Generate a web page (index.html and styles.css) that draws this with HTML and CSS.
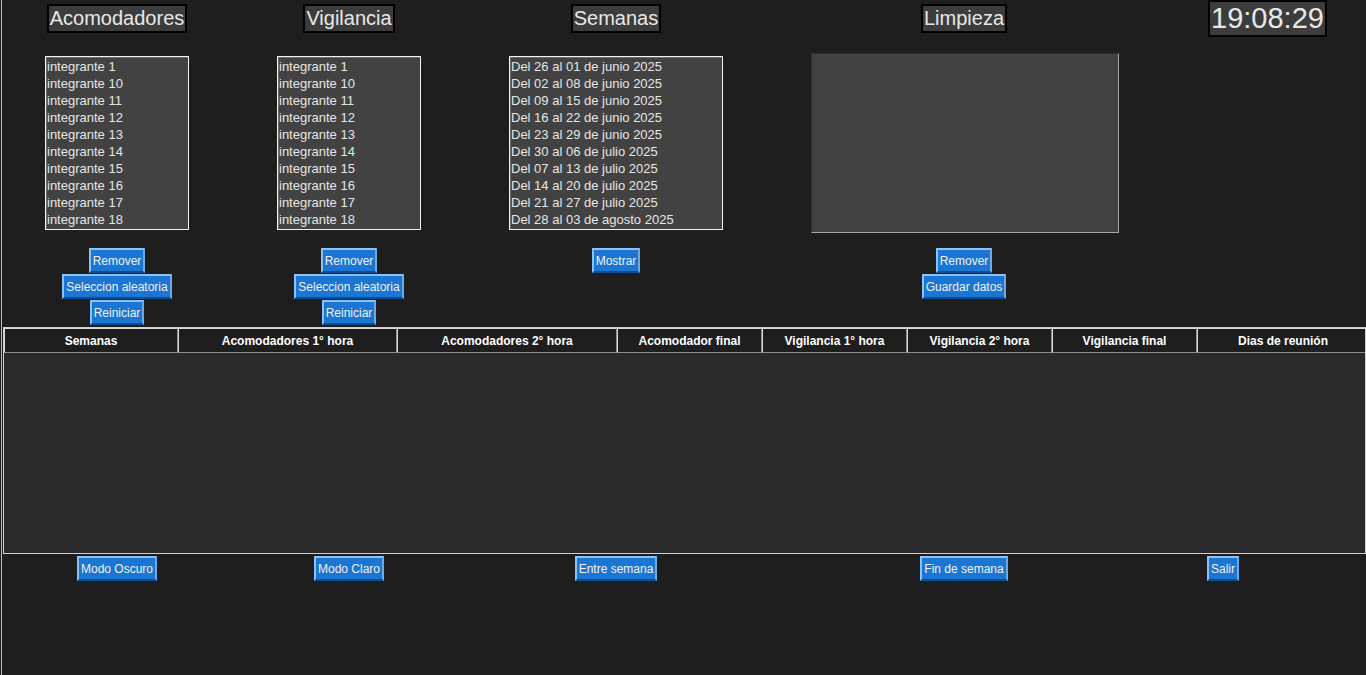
FILE: index.html
```html
<!DOCTYPE html>
<html lang="es">
<head>
<meta charset="utf-8">
<title>Asignaciones</title>
<link rel="stylesheet" href="styles.css">
</head>
<body>
<div class="app">
  <section class="top cols">
    <div class="title">Acomodadores</div>
    <div class="title">Vigilancia</div>
    <div class="title">Semanas</div>
    <div class="title">Limpieza</div>
    <div class="clock">19:08:29</div>

    <ul class="listbox lb-person">
      <li>integrante 1</li><li>integrante 10</li><li>integrante 11</li><li>integrante 12</li><li>integrante 13</li>
      <li>integrante 14</li><li>integrante 15</li><li>integrante 16</li><li>integrante 17</li><li>integrante 18</li>
    </ul>
    <ul class="listbox lb-person">
      <li>integrante 1</li><li>integrante 10</li><li>integrante 11</li><li>integrante 12</li><li>integrante 13</li>
      <li>integrante 14</li><li>integrante 15</li><li>integrante 16</li><li>integrante 17</li><li>integrante 18</li>
    </ul>
    <ul class="listbox lb-weeks">
      <li>Del 26 al 01 de junio 2025</li><li>Del 02 al 08 de junio 2025</li><li>Del 09 al 15 de junio 2025</li>
      <li>Del 16 al 22 de junio 2025</li><li>Del 23 al 29 de junio 2025</li><li>Del 30 al 06 de julio 2025</li>
      <li>Del 07 al 13 de julio 2025</li><li>Del 14 al 20 de julio 2025</li><li>Del 21 al 27 de julio 2025</li>
      <li>Del 28 al 03 de agosto 2025</li>
    </ul>
    <div class="textbox"></div>
    <div class="empty"></div>

    <div class="stack">
      <button class="btn">Remover</button>
      <button class="btn">Seleccion aleatoria</button>
      <button class="btn">Reiniciar</button>
    </div>
    <div class="stack">
      <button class="btn">Remover</button>
      <button class="btn">Seleccion aleatoria</button>
      <button class="btn">Reiniciar</button>
    </div>
    <div class="stack">
      <button class="btn">Mostrar</button>
    </div>
    <div class="stack">
      <button class="btn">Remover</button>
      <button class="btn">Guardar datos</button>
    </div>
    <div class="empty"></div>
  </section>

  <section class="table">
    <div class="thead">
      <div class="th w1">Semanas</div>
      <div class="th w2">Acomodadores 1° hora</div>
      <div class="th w3">Acomodadores 2° hora</div>
      <div class="th w4">Acomodador final</div>
      <div class="th w4">Vigilancia 1° hora</div>
      <div class="th w4">Vigilancia 2° hora</div>
      <div class="th w4">Vigilancia final</div>
      <div class="th w5">Dias de reunión</div>
    </div>
    <div class="tbody"></div>
  </section>

  <section class="bottom cols">
    <button class="btn">Modo Oscuro</button>
    <button class="btn">Modo Claro</button>
    <button class="btn">Entre semana</button>
    <button class="btn">Fin de semana</button>
    <button class="btn salir">Salir</button>
  </section>
</div>
</body>
</html>
```

FILE: styles.css
```css
html, body {
  margin: 0;
  padding: 0;
  background: #1e1e1e;
  height: 100%;
  overflow: hidden;
}

.app {
  margin-left: 1px;
  border-left: 1px solid #bdbdbd;
  height: 100%;
  font-family: "Liberation Sans", Arial, sans-serif;
  color: #e6e6e6;
}

.cols {
  display: grid;
  grid-template-columns: 230px 234px 300px 396px 1fr;
  justify-items: center;
}

.top {
  grid-template-rows: 37px 211px 79px;
  align-items: center;
}

.title {
  background: #3c3c3c;
  border: 2px solid #000;
  font-size: 20px;
  line-height: 25px;
  padding: 0 1px;
  color: #e8e8e8;
}

.clock {
  justify-self: start;
  margin-left: 46px;
  background: #3c3c3c;
  border: 2px solid #000;
  font-size: 29px;
  line-height: 33px;
  padding: 0 1px;
  color: #e8e8e8;
}

.listbox {
  list-style: none;
  margin: 0;
  padding: 1px 0 0 1px;
  box-sizing: border-box;
  height: 174px;
  background: #424242;
  border: 1px solid #f2f2f2;
  box-shadow: inset 1px 1px 0 #6a6a6a;
  font-size: 13px;
  line-height: 17px;
  color: #e6e6e6;
  overflow: hidden;
}

.lb-person { width: 144px; }
.lb-weeks { width: 214px; }

.textbox {
  width: 308px;
  height: 180px;
  margin-left: 2px;
  box-sizing: border-box;
  background: #424242;
  border: 1px solid #a8a8a8;
  border-top-color: #2e2e2e;
  border-left-color: #2e2e2e;
}

.stack {
  align-self: start;
  display: flex;
  flex-direction: column;
  align-items: center;
  gap: 1px;
}

.btn {
  box-sizing: border-box;
  height: 25px;
  margin: 0;
  padding: 0 2px;
  background: #1b75d3;
  color: #f2f2f2;
  font-family: "Liberation Sans", Arial, sans-serif;
  font-size: 12px;
  border: 2px solid #8cc2f2;
  border-right-color: #6ea9e4;
  border-bottom-color: #0f4c90;
  cursor: pointer;
}

.table {
  margin: 0 0 0 1px;
  height: 227px;
  box-sizing: border-box;
  border: 1px solid #cfcfcf;
  background: #2a2a2a;
  overflow: hidden;
}

.thead {
  display: flex;
  height: 25px;
}

.th {
  flex: none;
  box-sizing: border-box;
  display: flex;
  align-items: center;
  justify-content: center;
  padding-top: 1px;
  background: #1e1e1e;
  color: #ffffff;
  font-weight: bold;
  font-size: 12px;
  border: 1px solid #dcd9d1;
  border-right-color: #8e8d88;
  border-bottom-color: #8e8d88;
  white-space: nowrap;
}

.w1 { width: 174px; }
.w2 { width: 219px; }
.w3 { width: 220px; }
.w4 { width: 145px; }
.w5 { width: 172px; }

.bottom {
  margin-top: 2px;
  align-items: start;
}

.salir {
  justify-self: start;
  margin-left: 45px;
}
```
